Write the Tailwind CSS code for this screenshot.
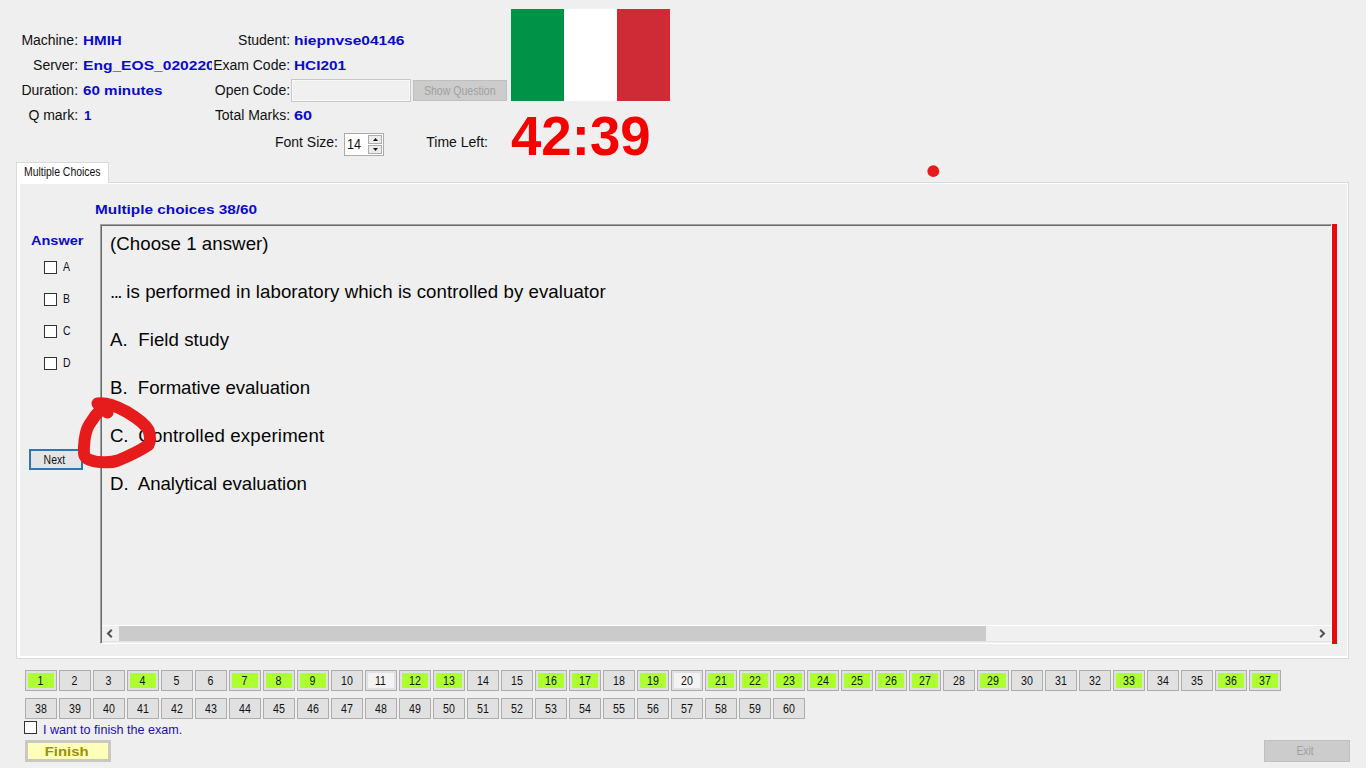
<!DOCTYPE html>
<html lang="en">
<head>
<meta charset="utf-8">
<title>Exam client</title>
<script src="https://cdn.jsdelivr.net/npm/@tailwindcss/browser@4"></script>
</head>
<body class="relative w-[1366px] h-[768px] overflow-hidden bg-[#efefef] font-['Liberation_Sans',Arial,sans-serif] text-[13.33px] text-[#111] flex flex-col">

<!-- Exam details -->
<header class="flex h-[162px] shrink-0">
  <div class="w-[507px] pt-[28px] leading-[25px] whitespace-nowrap">
    <div class="grid grid-cols-[78px_134px_78px_217px] h-[100px] text-[14px] tracking-[-0.03px]">
      <div class="text-right">Machine:</div>
      <div class="pl-[5px] font-bold text-[13.33px] text-[#0a0acc] tracking-normal"><span class="inline-block origin-left scale-x-[1.14]">HMIH</span></div>
      <div class="text-right">Student:</div>
      <div class="pl-[4px] font-bold text-[13.33px] text-[#0a0acc] tracking-normal"><span class="inline-block origin-left scale-x-[1.165]">hiepnvse04146</span></div>

      <div class="text-right">Server:</div>
      <div class="pl-[5px] font-bold text-[13.33px] text-[#0a0acc] tracking-normal overflow-hidden"><span class="inline-block origin-left scale-x-[1.17]">Eng_EOS_020220</span></div>
      <div class="flex justify-end">Exam Code:</div>
      <div class="pl-[4px] font-bold text-[13.33px] text-[#0a0acc] tracking-normal"><span class="inline-block origin-left scale-x-[1.15]">HCI201</span></div>

      <div class="text-right">Duration:</div>
      <div class="pl-[5px] font-bold text-[13.33px] text-[#0a0acc] tracking-normal"><span class="inline-block origin-left scale-x-[1.14]">60 minutes</span></div>
      <div class="flex justify-end">Open Code:</div>
      <div class="flex items-center gap-[2px] pl-[1px]">
        <div class="w-[120px] h-[23px] -mt-px border border-[#c8c8c8] bg-[#f0f0f0] outline-1 -outline-offset-2 outline-[#f8f8f8]"></div>
        <div class="w-[94px] h-[21px] -mt-px border border-[#bfbfbf] bg-[#cccccc] text-[#a0a0a0] text-[12px] leading-[20px] flex justify-center tracking-normal"><span class="scale-x-[0.88]">Show Question</span></div>
      </div>

      <div class="text-right">Q mark:</div>
      <div class="pl-[6px] font-bold text-[13.33px] text-[#0a0acc] tracking-normal">1</div>
      <div class="flex justify-end">Total Marks:</div>
      <div class="pl-[4px] font-bold text-[13.33px] text-[#0a0acc] tracking-normal"><span class="inline-block origin-left scale-x-[1.22]">60</span></div>
    </div>
    <div class="flex h-[28px] items-center text-[14px]">
      <div class="w-[338px] text-right">Font Size:</div>
      <div class="ml-[6px] mt-[5px] w-[40px] h-[23px] border border-[#ababab] bg-white flex justify-between">
        <span class="pl-[2px] leading-[20px]"><span class="inline-block origin-left scale-x-[0.9]">14</span></span>
        <span class="flex flex-col p-px pr-[1px]">
          <span class="w-[14px] h-[9px] border border-[#adadad] bg-[#ececec] flex items-center justify-center"><svg width="5" height="3"><path d="M0 3L2.5 0L5 3z" fill="#111"/></svg></span>
          <span class="w-[14px] h-[9px] mt-px border border-[#adadad] bg-[#ececec] flex items-center justify-center"><svg width="5" height="3"><path d="M0 0L2.500 3L5 0z" fill="#111"/></svg></span>
        </span>
      </div>
      <div class="w-[104px] text-right">Time Left:</div>
    </div>
  </div>
  <div class="ml-[4px] pt-[9px]">
    <div class="flex w-[159px] h-[92px]">
      <div class="w-[53px] bg-[#009246]"></div><div class="w-[53px] bg-white"></div><div class="w-[53px] bg-[#ce2b37]"></div>
    </div>
    <div class="mt-[4px] text-[56px] leading-[62px] font-bold text-[#f40202]"><span class="inline-block origin-left scale-x-[0.975]">42:39</span></div>
  </div>
</header>

<!-- Tab strip and page -->
<main class="ml-[16px] w-[1333px] h-[497px] shrink-0">
  <div class="relative z-10 w-[93px] h-[21px] border border-b-0 border-[#d9d9d9] bg-white text-[12px] leading-[19px] pl-[7px] whitespace-nowrap"><span class="inline-block origin-left scale-x-[0.87]">Multiple Choices</span></div>
  <div class="-mt-px w-[1333px] h-[477px] border border-[#d9d9d9] bg-white pt-px pl-[3px] pr-px pb-[2px]">
    <div class="h-full bg-[#efefef] flex">
      <aside class="w-[80px] shrink-0 pt-[47px] flex flex-col">
        <div class="pl-[11px] h-[20px] leading-[20px] font-bold text-[#0a0acc]"><span class="inline-block origin-left scale-x-[1.09]">Answer</span></div>
        <div id="answers" class="pl-[24px] text-[12px]"></div>
        <div class="ml-[9px] mt-[70px] w-[54px] h-[21px] border-2 border-[#2a78b8] bg-[#e3e5e7] text-[12px] leading-[18px] flex justify-center pr-[3px]"><span class="scale-x-[0.87]">Next</span></div>
      </aside>
      <section class="flex-1">
        <div class="-ml-[5px] h-[40px] pt-[16px] leading-[20px] font-bold text-[#0a0acc]"><span class="inline-block origin-left scale-x-[1.152]">Multiple choices 38/60</span></div>
        <div class="flex">
          <div class="w-[1232px] h-[420px] border-t border-l border-[#a0a0a0] border-b border-r border-b-white border-r-white">
            <div class="h-full border-t border-l border-[#696969] flex flex-col">
              <div class="flex-1 pl-[8px] pt-[6px] text-[18.67px] leading-[24px] text-[#050505] tracking-[0.06px] whitespace-pre">(Choose 1 answer)

<span class="tracking-[-1.5px]">...</span> is performed in laboratory which is controlled by evaluator

A.  Field study

<span class="tracking-[-0.05px]">B.  Formative evaluation</span>

<span class="tracking-[-0.2px]">C.  </span><span class="tracking-[0.17px]">Controlled experiment</span>

<span class="tracking-[-0.05px]">D.  Analytical evaluation</span></div>
              <div class="h-[17px] mb-px border-t border-white border-b border-b-[#e3e3e3] flex items-center bg-[#f0f0f0]">
                <div class="w-[17px] flex justify-center"><svg width="7" height="9" class="-ml-[2px]" fill="none" stroke="#505050" stroke-width="2"><path d="M5.8 0.8L2 4.5L5.8 8.2"/></svg></div>
                <div class="w-[867px] h-full bg-[#cbcbcb]"></div>
                <div class="ml-auto w-[17px] flex justify-center"><svg width="7" height="9" class="-ml-px" fill="none" stroke="#505050" stroke-width="2"><path d="M1.2 0.8L5 4.5L1.2 8.2"/></svg></div>
              </div>
            </div>
          </div>
          <div class="w-[5px] h-[420px] bg-[#e60a0a]"></div>
        </div>
      </section>
    </div>
  </div>
</main>

<!-- Question navigator -->
<nav id="questions" class="ml-[25px] mt-[11px] flex flex-wrap w-[1260px] gap-x-[2px] gap-y-[7px] text-[12.5px] leading-[20px]"></nav>

<footer class="ml-[24px] mr-[16px] mt-[2px]">
  <label class="flex items-center h-[15px] text-[12.6px] text-[#1a10b4] whitespace-nowrap"><span class="w-[13px] h-[13px] -mt-[2px] border border-[#333] bg-white mr-[6px]"></span><span class="mt-[3px]">I want to finish the exam.</span></label>
  <div class="flex justify-between mt-[4px] pl-px">
    <div class="w-[86px] h-[22px] border-[3px] border-[#c9c9c1] bg-[#ffffb9] text-[#98900a] font-bold leading-[18px] flex justify-center pr-[3px]"><span class="scale-x-[1.12]">Finish</span></div>
    <div class="w-[86px] h-[22px] border border-[#bfbfbf] bg-[#cccccc] text-[#a0a0a0] text-[12px] leading-[21px] flex justify-center pr-[3px]"><span class="scale-x-[0.85]">Exit</span></div>
  </div>
</footer>

<!-- Freehand pen marks -->
<svg class="absolute inset-0 pointer-events-none" width="1366" height="768">
  <circle cx="933.3" cy="171.2" r="5.9" fill="#e61c1c"/>
  <path d="M107.500 412.500L97.500 403.500C105 402 117 406 127 412C137 418 145 424 148.500 430C150.500 436 150.500 441 148.500 445C141 450 129 456 118 460.500C111 463 98 463 90 460C84 458 83.500 455 84 447C84.500 437 86 430 89 425C92 420 96 414 102 408" fill="none" stroke="#e61c1c" stroke-width="12" stroke-linecap="round" stroke-linejoin="round"/>
</svg>

<script>
  document.getElementById('answers').innerHTML = ['A', 'B', 'C', 'D'].map(t =>
    `<div class="flex items-center h-[32px]"><span class="w-[13px] h-[13px] border border-[#333] bg-white mr-[6px]"></span><span class="origin-left scale-x-[0.87]">${t}</span></div>`).join('');
  const answered = [1, 4, 7, 8, 9, 12, 13, 16, 17, 19, 21, 22, 23, 24, 25, 26, 27, 29, 33, 36, 37];
  const visited = [11, 20];
  let html = '';
  for (let i = 1; i <= 60; i++) {
    const fill = answered.includes(i) ? 'bg-[#adff2f]' : visited.includes(i) ? 'bg-[#f3f3f3]' : 'bg-[#e1e1e1]';
    html += `<div class="w-[32px] h-[21px] border border-[#adadad] bg-[#e1e1e1] p-[2px]"><div class="${fill} h-[15px] leading-[17px] flex justify-center pr-px"><span class="scale-x-[0.85]">${i}</span></div></div>`;
  }
  document.getElementById('questions').innerHTML = html;
</script>
</body>
</html>
